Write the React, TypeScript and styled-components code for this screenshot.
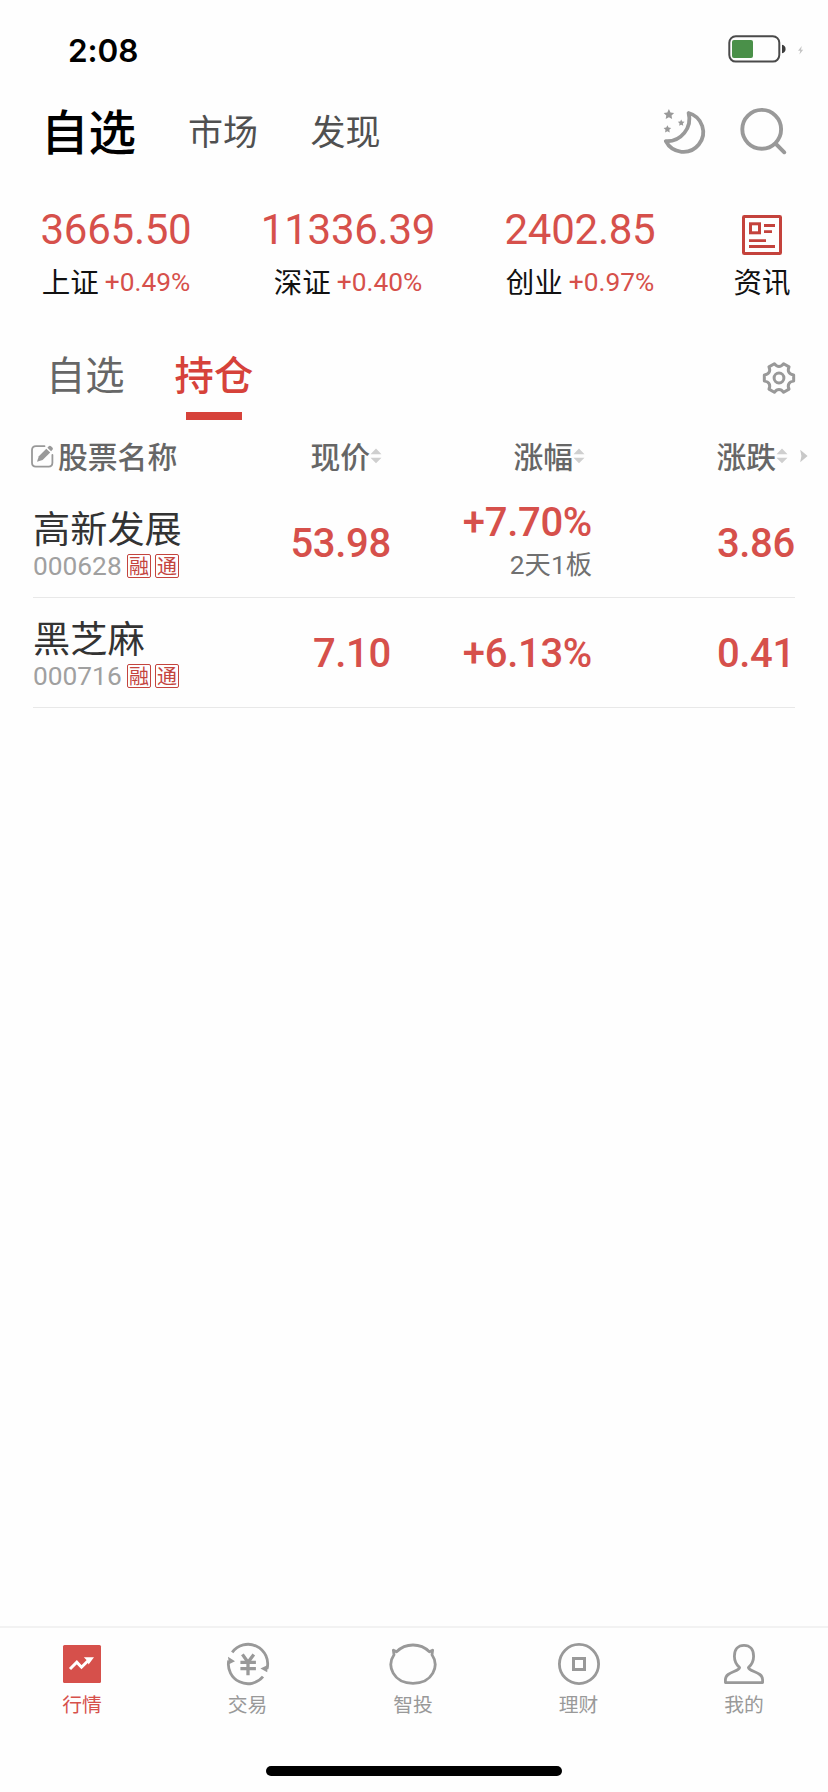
import React from "react";
import styled, { createGlobalStyle } from "styled-components";

const RED = "#d6504b";
const GREY = "#999999";
const CJK = `"Noto Sans CJK SC", sans-serif`;

const GlobalStyle = createGlobalStyle`
  * { box-sizing: border-box; }
  html, body { margin: 0; padding: 0; background: #fefefe; }
  body { font-family: Roboto, ${CJK}; }
  svg { display: block; flex: none; }
`;

const Screen = styled.div`
  width: 828px;
  height: 1792px;
  display: flex;
  flex-direction: column;
  background: #fefefe;
  overflow: hidden;
`;

const StatusBar = styled.div`
  height: 97px;
  padding: 1px 24px 0 68px;
  display: flex;
  align-items: center;
  justify-content: space-between;
`;

const Clock = styled.span`
  font: 600 31.5px/40px Inter, sans-serif;
  letter-spacing: -0.1px;
  color: #000;
  padding-top: 3px;
`;

const Header = styled.header`
  height: 68px;
  margin-bottom: 1px;
  padding: 0 40px 0 41px;
  display: flex;
  align-items: center;
`;

const NavItem = styled.span<{ $active?: boolean }>`
  font-family: ${CJK};
  font-size: ${(p) => (p.$active ? 47.5 : 35)}px;
  font-weight: ${(p) => (p.$active ? 500 : 400)};
  line-height: 66px;
  padding-bottom: 3px;
  color: ${(p) => (p.$active ? "#000" : "#505050")};
  margin-right: ${(p) => (p.$active ? 52 : 52.5)}px;
  white-space: nowrap;
`;

const HeaderActions = styled.div`
  margin-left: auto;
  display: flex;
  gap: 32px;
`;

const Indices = styled.section`
  height: 164px;
  padding-top: 34px;
  display: grid;
  grid-template-columns: 232px 232px 232px 132px;
`;

const IndexCell = styled.div`
  display: flex;
  flex-direction: column;
  align-items: center;
`;

const IndexValue = styled.div`
  font-size: 42px;
  line-height: 60px;
  letter-spacing: -0.25px;
  color: ${RED};
`;

const IndexMeta = styled.div`
  display: flex;
  align-items: center;
  gap: 6px;
  height: 44px;
  font-size: 26.3px;
  line-height: 44px;
  color: ${RED};
`;

const IndexName = styled.span`
  font-family: ${CJK};
  font-size: 28.5px;
  line-height: 42px;
  padding-bottom: 2px;
  color: #111;
`;

const NewsIconBox = styled.div`
  height: 60px;
  padding-top: 15px;
`;

const SubTabs = styled.div`
  height: 90px;
  padding: 0 32px 0 46px;
  display: flex;
  align-items: flex-start;
`;

const SubTab = styled.div<{ $active?: boolean }>`
  display: flex;
  flex-direction: column;
  align-items: center;
  font-family: ${CJK};
  font-size: 39.3px;
  padding-top: 4px;
  line-height: 78px;
  font-weight: ${(p) => (p.$active ? 500 : 400)};
  color: ${(p) => (p.$active ? "#d6423a" : "#666")};
  margin-right: 50px;
`;

const Underline = styled.i`
  width: 56px;
  height: 8px;
  background: #d6423a;
`;

const GearBox = styled.div`
  margin-left: auto;
  padding-top: 31px;
`;

const TableHead = styled.div`
  height: 68px;
  display: grid;
  grid-template-columns: 382px 203px 203px 40px;
  color: #666;
`;

const HeadGroup = styled.div`
  display: flex;
  justify-content: space-between;
  padding-left: 31px;
`;

const HeadCell = styled.div<{ $end?: boolean }>`
  display: flex;
  align-items: center;
  justify-content: ${(p) => (p.$end ? "flex-end" : "flex-start")};
  gap: ${(p) => (p.$end ? 0 : 4)}px;
  height: 72px;
`;

const HeadLabel = styled.span`
  font-family: ${CJK};
  font-weight: 500;
  font-size: 29.8px;
  line-height: 44px;
  padding-bottom: 2px;
`;

const MoreCell = styled.div`
  height: 72px;
  display: flex;
  align-items: center;
  padding-left: 12px;
`;

const Row = styled.div`
  margin: 0 33px;
  height: 110px;
  border-bottom: 1px solid #e8e8e8;
  display: grid;
  grid-template-columns: 202px 156px 201px 1fr;
`;

const StockCell = styled.div`
  padding-top: 17px;
`;

const StockName = styled.div`
  font-family: ${CJK};
  font-size: 37.2px;
  line-height: 44px;
  color: #333;
  white-space: nowrap;
`;

const StockMeta = styled.div`
  display: flex;
  align-items: center;
  height: 32px;
  margin-top: 1px;
`;

const Code = styled.span`
  width: 94px;
  font-size: 26.3px;
  line-height: 32px;
  color: #a0a0a0;
`;

const Badge = styled.span`
  width: 24px;
  height: 24px;
  margin-right: 4px;
  border: 1px solid #c4443e;
  border-radius: 2px;
  font-family: ${CJK};
  font-size: 20px;
  line-height: 22px;
  color: #c4443e;
  display: flex;
  justify-content: center;
`;

const NumCell = styled.div<{ $noted?: boolean }>`
  display: flex;
  flex-direction: column;
  align-items: flex-end;
  justify-content: center;
  padding-top: ${(p) => (p.$noted ? 0 : 3)}px;
  padding-bottom: ${(p) => (p.$noted ? 2 : 0)}px;
`;

const Value = styled.span`
  font-size: 40px;
  font-weight: 500;
  line-height: 46px;
  letter-spacing: -0.3px;
  color: ${RED};
`;

const Note = styled.span`
  font-size: 26.3px;
  line-height: 38px;
  color: #707070;
`;

const TabBar = styled.nav`
  margin-top: auto;
  margin-left: -0.75px;
  height: 140px;
  border-top: 2px solid #f2f2f2;
  padding-right: 1.25px;
  display: grid;
  grid-template-columns: repeat(5, 1fr);
`;

const TabItem = styled.div<{ $active?: boolean }>`
  display: flex;
  flex-direction: column;
  align-items: center;
  padding-top: 13px;
  font-family: ${CJK};
  font-size: 19.8px;
  line-height: 34px;
  color: ${(p) => (p.$active ? RED : GREY)};
`;

const HomeIndicator = styled.div`
  width: 296px;
  height: 10px;
  border-radius: 5px;
  background: #000;
  margin: 0 auto 16px;
`;

const Battery = () => (
  <svg width="78" height="30" viewBox="726 34 78 30">
    <rect x="729.3" y="36.2" width="50" height="25.4" rx="6.5" fill="none" stroke="#4a4a4a" strokeWidth="2" />
    <rect x="732" y="40" width="21" height="18" rx="2" fill="#4a9049" />
    <path d="M782 44.7 C786.8 45.5 786.8 52.5 782 53.2Z" fill="#3c3c3c" />
    <path d="M801.8 46 L798 50.8 H800.3 L799.4 54.5 L803.2 49.7 H801Z" fill="#c4c4c4" />
  </svg>
);

const star = (cx: number, cy: number, r: number) =>
  Array.from({ length: 10 }, (_, i) => {
    const a = (-90 + i * 36) * (Math.PI / 180);
    const k = i % 2 ? r * 0.5 : r;
    return `${(cx + k * Math.cos(a)).toFixed(2)},${(cy + k * Math.sin(a)).toFixed(2)}`;
  }).join(" ");

const Moon = () => (
  <svg width="46" height="50" viewBox="662 106 46 50">
    <path
      d="M688.6 113 A19.8 19.8 0 1 1 665.8 141.2 A22.5 22.5 0 0 0 688.6 113Z"
      fill="none"
      stroke={GREY}
      strokeWidth="3.8"
      strokeLinejoin="round"
    />
    <g fill={GREY}>
      <polygon points={star(668.9, 114.6, 5.5)} />
      <polygon points={star(681.2, 122.9, 3.5)} />
      <polygon points={star(667.4, 129.2, 4)} />
    </g>
  </svg>
);

const Search = () => (
  <svg width="48" height="50" viewBox="740 106 48 50">
    <g fill="none" stroke={GREY} strokeWidth="3.9" strokeLinecap="round">
      <circle cx="761.7" cy="129.3" r="19.4" />
      <path d="M776 144 L784.3 152.3" />
    </g>
  </svg>
);

const News = () => (
  <svg width="40" height="40" viewBox="0 0 40 40">
    <g fill="none" stroke="#c4423c" strokeWidth="3">
      <rect x="1.5" y="1.5" width="37" height="37" rx="0.8" />
      <rect x="8.5" y="8.8" width="9" height="9" />
      <path d="M22 10.5H33M22 16.7H30M7 25.6H24M7 31.5H33" strokeWidth="2.8" />
    </g>
  </svg>
);

const gearPath = (() => {
  const pt = (r: number, deg: number) => {
    const a = (deg * Math.PI) / 180;
    return `${(17 + r * Math.cos(a)).toFixed(2)} ${(17 + r * Math.sin(a)).toFixed(2)}`;
  };
  let d = "";
  for (let i = 0; i < 6; i++) {
    const c = i * 60;
    d += `${i ? "L" : "M"}${pt(15, c - 12)}L${pt(15, c + 12)}C${pt(10.6, c + 20)} ${pt(10.6, c + 40)} ${pt(15, c + 48)}`;
  }
  return d + "Z";
})();

const Gear = () => (
  <svg width="34" height="34" viewBox="0 0 34 34" fill="none" stroke={GREY} strokeWidth="3" strokeLinejoin="round">
    <path d={gearPath} />
    <circle cx="17" cy="17" r="4.9" />
  </svg>
);

const Edit = () => (
  <svg width="23" height="23" viewBox="0 0 23 23">
    <path
      d="M13.5 1.2H5Q1 1.2 1 5V17.8Q1 21.6 5 21.6H17.6Q21.4 21.6 21.4 17.8V10"
      fill="none"
      stroke={GREY}
      strokeWidth="1.8"
      strokeLinecap="round"
    />
    <path d="M6 16.8 L7.8 11.2 L15.3 3.7 L19.2 7.5 L11.6 15Z" fill={GREY} />
    <path d="M16.4 2.7 L18 1.1 Q19 0.3 20 1.2 L21.6 2.8 Q22.3 3.8 21.5 4.8 L20.1 6.3Z" fill={GREY} />
  </svg>
);

const Sort = () => (
  <svg width="12" height="16" viewBox="0 0 12 16" fill="#cfcfcf">
    <path d="M0.5 6.2L6 0.6L11.5 6.2ZM0.5 9.8H11.5L6 15.2Z" />
  </svg>
);

const More = () => (
  <svg width="8" height="14" viewBox="0 0 8 14" fill="#c8c8c8">
    <path d="M0.2 0.8L7.6 7L0.2 13.2L1.4 7Z" />
  </svg>
);

const TabIcon = ({ name }: { name: string }) => (
  <svg width="50" height="46" viewBox="-25 -23 50 46" fill="none" stroke={GREY} strokeWidth="2.8" strokeLinejoin="round">
    {name === "quotes" && (
      <>
        <rect x="-19" y="-19" width="38" height="38" rx="1.5" fill={RED} stroke="none" />
        <path d="M-12 5 L-5.2 -1.8 L-0.5 3.2 L7 -4.3" stroke="#fff" strokeWidth="3" strokeLinejoin="miter" />
        <path d="M1.8 -6.7 H12 L6.6 0.6 L5 -3.5Z" fill="#fff" stroke="none" />
      </>
    )}
    {name === "trade" && (
      <>
        <path d="M-15.8 -11.6 A19.6 19.6 0 0 1 19 5" />
        <path d="M15 12.7 A19.6 19.6 0 0 1 -19.3 -3.5" />
        <path d="M-20 -7.2 L-13 -2.8 L-19 0.2Z M19.8 1 L12.4 4.6 L19.2 8.2Z" fill={GREY} stroke="none" />
        <path d="M-5.6 -9.6 L0 -1.8 L5.8 -9.6 M0 -2 V11.2 M-7.6 -1.6 H7.9 M-7.6 4.6 H7.9" strokeWidth="3.3" />
      </>
    )}
    {name === "invest" && (
      <path d="M-16.4 -12.2 C-7.5 -21.3 7.5 -21.3 16.4 -12.2 L19.6 -13.8 L19 -9.2 C26.5 1.8 20 19.3 0 19.3 C-20 19.3 -26.5 1.8 -19 -9.2 L-19.6 -13.8Z" />
    )}
    {name === "wealth" && (
      <>
        <circle r="19.6" />
        <rect x="-5.5" y="-5.5" width="11" height="11" strokeWidth="3" strokeLinejoin="miter" />
      </>
    )}
    {name === "mine" && (
      <path d="M-4.4 3.6 C-7.8 0.6 -9.6 -3.5 -9.6 -7.8 C-9.6 -14.5 -6 -18.6 0 -18.6 C6 -18.6 9.6 -14.5 9.6 -7.8 C9.6 -3.5 7.8 0.6 4.4 3.6 C5.5 8 18.6 7.5 18.6 15.8 V18.6 H-18.6 V15.8 C-18.6 7.5 -5.5 8 -4.4 3.6Z" />
    )}
  </svg>
);

const indices = [
  { name: "上证", value: "3665.50", change: "+0.49%" },
  { name: "深证", value: "11336.39", change: "+0.40%" },
  { name: "创业", value: "2402.85", change: "+0.97%" },
];

const stocks = [
  { name: "高新发展", code: "000628", price: "53.98", pct: "+7.70%", note: "2天1板", diff: "3.86" },
  { name: "黑芝麻", code: "000716", price: "7.10", pct: "+6.13%", note: "", diff: "0.41" },
];

const tabs = [
  { label: "行情", icon: "quotes" },
  { label: "交易", icon: "trade" },
  { label: "智投", icon: "invest" },
  { label: "理财", icon: "wealth" },
  { label: "我的", icon: "mine" },
];

export default function App() {
  return (
    <Screen>
      <GlobalStyle />
      <StatusBar>
        <Clock>2:08</Clock>
        <Battery />
      </StatusBar>
      <Header>
        <NavItem $active>自选</NavItem>
        <NavItem>市场</NavItem>
        <NavItem>发现</NavItem>
        <HeaderActions>
          <Moon />
          <Search />
        </HeaderActions>
      </Header>
      <Indices>
        {indices.map((i) => (
          <IndexCell key={i.name}>
            <IndexValue>{i.value}</IndexValue>
            <IndexMeta>
              <IndexName>{i.name}</IndexName>
              {i.change}
            </IndexMeta>
          </IndexCell>
        ))}
        <IndexCell>
          <NewsIconBox>
            <News />
          </NewsIconBox>
          <IndexName>资讯</IndexName>
        </IndexCell>
      </Indices>
      <SubTabs>
        <SubTab>自选</SubTab>
        <SubTab $active>
          持仓
          <Underline />
        </SubTab>
        <GearBox>
          <Gear />
        </GearBox>
      </SubTabs>
      <TableHead>
        <HeadGroup>
          <HeadCell>
            <Edit />
            <HeadLabel>股票名称</HeadLabel>
          </HeadCell>
          <HeadCell $end>
            <HeadLabel>现价</HeadLabel>
            <Sort />
          </HeadCell>
        </HeadGroup>
        <HeadCell $end>
          <HeadLabel>涨幅</HeadLabel>
          <Sort />
        </HeadCell>
        <HeadCell $end>
          <HeadLabel>涨跌</HeadLabel>
          <Sort />
        </HeadCell>
        <MoreCell>
          <More />
        </MoreCell>
      </TableHead>
      {stocks.map((s) => (
        <Row key={s.code}>
          <StockCell>
            <StockName>{s.name}</StockName>
            <StockMeta>
              <Code>{s.code}</Code>
              <Badge>融</Badge>
              <Badge>通</Badge>
            </StockMeta>
          </StockCell>
          <NumCell>
            <Value>{s.price}</Value>
          </NumCell>
          <NumCell $noted={!!s.note}>
            <Value>{s.pct}</Value>
            {s.note && <Note>{s.note}</Note>}
          </NumCell>
          <NumCell>
            <Value>{s.diff}</Value>
          </NumCell>
        </Row>
      ))}
      <TabBar>
        {tabs.map((t, i) => (
          <TabItem key={t.label} $active={i === 0}>
            <TabIcon name={t.icon} />
            {t.label}
          </TabItem>
        ))}
      </TabBar>
      <HomeIndicator />
    </Screen>
  );
}
